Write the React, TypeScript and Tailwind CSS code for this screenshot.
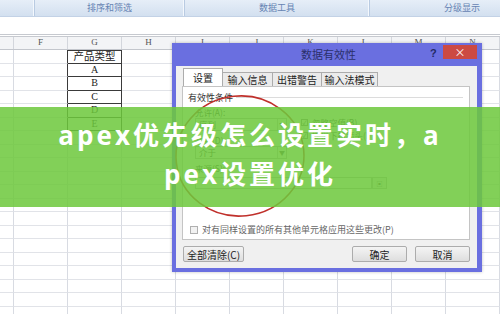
import React from 'react';

const cols = ['', 'F', 'G', 'H', 'I', 'J', 'K', 'L', 'M', 'N'];
const gItems = ['产品类型', 'A', 'B', 'C', 'D', 'E'];

function Ribbon() {
  const seg = 'shrink-0 h-full flex items-center justify-center border-r border-[#b9cbe2] shadow-[inset_-1px_0_0_#f4f8fd] text-[9px] text-[#6683b3]';
  return (
    <div className="flex h-[17px] overflow-hidden bg-gradient-to-b from-[#e6eef8] to-[#d3e0f0] border-b border-[#c3d2e6]">
      <div className={`${seg} w-[35px]`}></div>
      <div className={`${seg} w-[150px]`}>排序和筛选</div>
      <div className={`${seg} w-[185px]`}>数据工具</div>
      <div className={`${seg} w-[185px]`}>分级显示</div>
    </div>
  );
}

function Sheet() {
  return (
    <div>
      <div className="h-[20px] bg-white border-b-[3px] border-double border-[#c6c9cf]"></div>
      <div className="flex h-[13px] bg-[#f3f4f6] border-b border-[#c3c6cc]">
        {cols.map((c, i) => (
          <div
            key={i}
            className={`${i === 0 ? 'w-[14px]' : 'w-[54px]'} shrink-0 border-r border-[#d3d6dc] flex items-center justify-center text-[9px] text-[#555] font-['Liberation_Serif',serif]`}
          >
            {c}
          </div>
        ))}
      </div>
      {Array.from({ length: 20 }).map((_, r) => (
        <div key={r} className="flex h-[13.5px]">
          {cols.map((_, i) => {
            const inTable = r < gItems.length;
            const darkRight = inTable && (i === 1 || i === 2);
            const darkBottom = inTable && i === 2;
            return (
              <div
                key={i}
                className={`${i === 0 ? 'w-[14px]' : 'w-[54px]'} shrink-0 border-r border-b ${darkRight ? 'border-r-[#3a3a3a]' : 'border-r-[#d8dbe2]'} ${darkBottom ? 'border-b-[#3a3a3a]' : 'border-b-[#e1e3e8]'} ${inTable && i === 2 && r === 0 ? 'shadow-[inset_0_1px_0_#3a3a3a]' : ''} flex items-center justify-center leading-none text-[#222]`}
              >
                {inTable && i === 2 ? (
                  <span className={r === 0 ? "text-[10.5px] font-['Noto_Sans_CJK_SC',sans-serif]" : "text-[10px] font-['Liberation_Serif',serif]"}>
                    {gItems[r]}
                  </span>
                ) : null}
              </div>
            );
          })}
        </div>
      ))}
    </div>
  );
}

function Dropdown({ label }: { label: string }) {
  return (
    <div className="flex h-[13px] border border-[#b8b8b8] bg-white">
      <div className="flex-1 pl-[3px] text-[8.5px] leading-[11px] text-[#333]">{label}</div>
      <div className="w-[9px] border-l border-[#c8c8c8] flex items-center justify-center text-[6px] text-[#555]">▼</div>
    </div>
  );
}

function Check({ label, checked }: { label: string; checked?: boolean }) {
  return (
    <div className="flex items-center gap-[4px] h-[9px]">
      <div className="w-[7px] h-[7px] border border-[#8a8a8a] bg-white flex items-center justify-center text-[6px] leading-none text-[#333]">
        {checked ? '✓' : ''}
      </div>
      <span className="text-[8.5px] leading-none text-[#333]">{label}</span>
    </div>
  );
}

function Dialog() {
  const tab = 'shrink-0 flex items-center justify-center text-[10px] text-[#222] border border-b-0 border-[#acacac]';
  const btn = 'h-[16px] w-[55px] flex items-center justify-center text-[10px] text-[#222] bg-gradient-to-b from-[#f4f4f4] to-[#dedede] border border-[#acacac] rounded-[2px]';
  return (
    <div className="absolute left-[172px] top-[43px] w-[310px] h-[229px] bg-[#6a6fe0] flex flex-col pl-[4px] pr-[5px] pb-[4px] shadow-[0_0_3px_rgba(0,0,0,0.25)]">
      <div className="relative h-[23px] shrink-0 flex items-center justify-center pl-[4px]">
        <span className="text-[11px] text-[#2b2f6b]">数据有效性</span>
        <span className="absolute left-[254px] top-[2px] text-[11px] font-bold text-[#232a66] font-['Liberation_Sans',sans-serif]">?</span>
        <div className="absolute left-[267px] top-[2px] w-[34px] h-[14px] bg-[#cc4a43] flex items-center justify-center text-white text-[11px] leading-none">×</div>
      </div>
      <div className="flex-1 bg-[#f0f0f0] flex flex-col">
        <div className="flex items-end h-[18px] mt-[2px] ml-[7px]">
          <div className={`${tab} w-[40px] h-[18px] bg-white`}>设置</div>
          <div className={`${tab} w-[50px] h-[14px] bg-[#ebebeb] border-l-0`}>输入信息</div>
          <div className={`${tab} w-[49px] h-[14px] bg-[#ebebeb] border-l-0`}>出错警告</div>
          <div className={`${tab} w-[56px] h-[14px] bg-[#ebebeb] border-l-0`}>输入法模式</div>
        </div>
        <div className="ml-[6px] w-[288px] h-[154px] border border-[#c4c4c4] bg-white flex flex-col">
          <div className="flex items-center h-[12px] mt-[4px] pl-[5px] pr-[6px]">
            <span className="text-[9px] leading-none text-[#333]">有效性条件</span>
            <div className="flex-1 h-px bg-[#dcdcdc] ml-[3px]"></div>
          </div>
          <div className="flex pl-[12px]">
            <div className="w-[92px] flex flex-col">
              <div className="h-[12px] mt-[3px] text-[8.5px] leading-[12px] text-[#333]">允许(A):</div>
              <Dropdown label="序列" />
              <div className="h-[12px] mt-[3px] text-[8.5px] leading-[12px] text-[#333]">数据(D):</div>
              <Dropdown label="介于" />
              <div className="h-[12px] mt-[3px] text-[8.5px] leading-[12px] text-[#333]">来源(S):</div>
            </div>
            <div className="ml-[14px] pt-[15px] flex flex-col gap-[4px]">
              <Check label="忽略空值(B)" checked />
              <Check label="提供下拉箭头(I)" checked />
            </div>
          </div>
          <div className="flex ml-[12px] mt-[3px] h-[12px]">
            <div className="w-[177px] border border-[#b8b8b8] bg-white"></div>
            <div className="w-[15px] border border-[#b8b8b8] bg-[#eeeeee] flex items-center justify-center text-[6px] text-[#555]">▣</div>
          </div>
          <div className="flex items-center gap-[4px] ml-[7px] mt-[36px] h-[9px]">
            <div className="w-[8px] h-[8px] border border-[#b0b0b0] bg-[#f2f2f2]"></div>
            <span className="text-[9px] leading-none text-[#666]">对有同样设置的所有其他单元格应用这些更改(P)</span>
          </div>
        </div>
        <div className="flex mt-[6px] pl-[7px] pr-[7px]">
          <div className={`${btn} w-[61px]`}>全部清除(C)</div>
          <div className="flex-1"></div>
          <div className={`${btn} border-[#4a8bc2]`}>确定</div>
          <div className={`${btn} ml-[8px]`}>取消</div>
        </div>
      </div>
    </div>
  );
}

export default function App() {
  return (
    <div className="relative w-[500px] h-[314px] overflow-hidden bg-white font-['Noto_Sans_CJK_SC',sans-serif]">
      <Ribbon />
      <Sheet />
      <Dialog />

      {/* 手绘红圈 */}
      <svg className="absolute left-[170px] top-[90px]" width="140" height="135" viewBox="0 0 140 135">
        <ellipse cx="70" cy="66" rx="64" ry="60" transform="rotate(-6 70 66)" fill="none" stroke="#c0302b" strokeWidth="1.6" />
      </svg>

      {/* 标题横幅 */}
      <div className="absolute left-0 top-[107px] w-[500px] h-[100px] bg-[rgba(110,200,60,0.86)] flex items-center justify-center pb-[4px]">
        <div className="w-[392px] text-center break-all text-[26px] leading-[39px] font-bold tracking-[3px] text-white font-['Open_Sans','Noto_Sans_CJK_SC',sans-serif]">
          apex优先级怎么设置实时，apex设置优化
        </div>
      </div>
    </div>
  );
}
